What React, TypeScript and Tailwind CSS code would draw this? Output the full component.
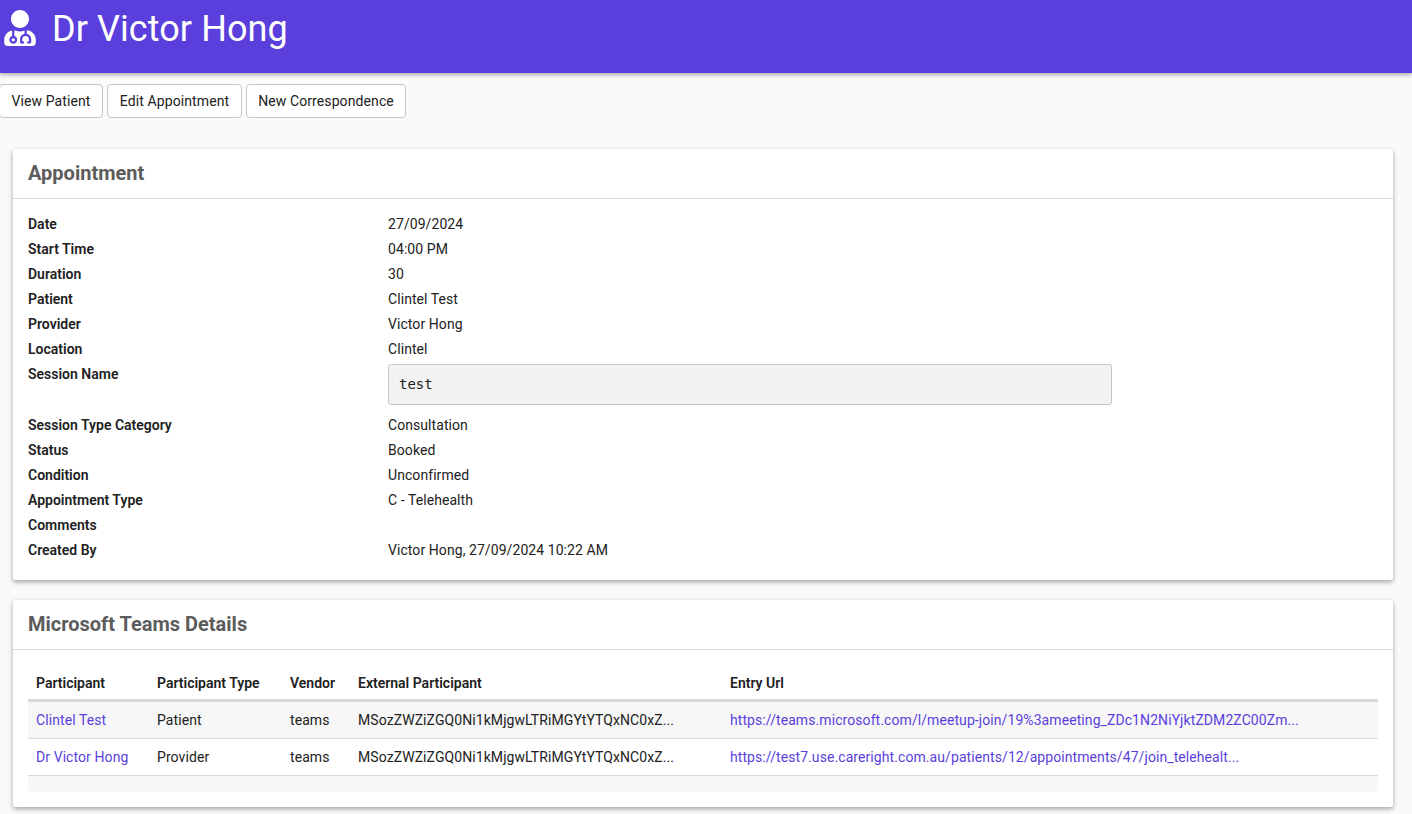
import { FaUserMd } from "react-icons/fa"

const details = [
    { label: "Date", value: "27/09/2024" },
    { label: "Start Time", value: "04:00 PM" },
    { label: "Duration", value: "30" },
    { label: "Patient", value: "Clintel Test" },
    { label: "Provider", value: "Victor Hong" },
    { label: "Location", value: "Clintel" },
]

const moreDetails = [
    { label: "Session Type Category", value: "Consultation" },
    { label: "Status", value: "Booked" },
    { label: "Condition", value: "Unconfirmed" },
    { label: "Appointment Type", value: "C - Telehealth" },
    { label: "Comments", value: "" },
    { label: "Created By", value: "Victor Hong, 27/09/2024 10:22 AM" },
]

const participants = [
    {
        name: "Clintel Test",
        type: "Patient",
        external: "MSozZWZiZGQ0Ni1kMjgwLTRiMGYtYTQxNC0xZ...",
        url: "https://teams.microsoft.com/l/meetup-join/19%3ameeting_ZDc1N2NiYjktZDM2ZC00Zm...",
        rowClass: "bg-[#f7f7f7]",
    },
    {
        name: "Dr Victor Hong",
        type: "Provider",
        external: "MSozZWZiZGQ0Ni1kMjgwLTRiMGYtYTQxNC0xZ...",
        url: "https://test7.use.careright.com.au/patients/12/appointments/47/join_telehealt...",
        rowClass: "bg-white",
    },
]

const headers = ["Participant", "Participant Type", "Vendor", "External Participant", "Entry Url"]

const DetailRow = ({ label, value }: { label: string; value: string }) => {
    return (
        <div className="flex h-[25px] items-center">
            <div className="w-[360px] font-semibold">{label}</div>
            <div className="tracking-[0.07px]">{value}</div>
        </div>
    )
}

const Card = ({ title, children }: { title: string; children: React.ReactNode }) => {
    return (
        <section className="rounded-[2px] bg-white shadow-[0_2px_5px_rgba(0,0,0,0.35)]">
            <h2 className="flex h-[50px] items-center border-b border-[#d9d9d9] px-[15px] pb-[2px] text-[20px] font-bold text-[#5c5c5c]">{title}</h2>
            {children}
        </section>
    )
}

export default function App() {
    return (
        <div className="h-[814px] overflow-hidden bg-[#fafafa] font-['Roboto',sans-serif] text-[14px] text-[#212121]">
            <header className="flex h-[73px] items-start gap-[16px] bg-[#5a3fdd] pl-[4px] pt-[10px] text-white shadow-[0_2px_4px_rgba(0,0,0,0.3)]">
                <FaUserMd className="h-[36px] w-[32px]" />
                <h1 className="text-[36px] leading-[38px] tracking-[0.08px]">Dr Victor Hong</h1>
            </header>

            <div className="mt-[11px] flex gap-[4px] -ml-[1px]">
                <button className="h-[34px] w-[104px] rounded-[4px] border border-[#c7c7c7] bg-white tracking-[0.1px]">View Patient</button>
                <button className="h-[34px] w-[135px] rounded-[4px] border border-[#c7c7c7] bg-white tracking-[0.1px]">Edit Appointment</button>
                <button className="h-[34px] w-[160px] rounded-[4px] border border-[#c7c7c7] bg-white tracking-[0.1px]">New Correspondence</button>
            </div>

            <main className="mt-[31px] ml-[13px] mr-[19px] flex flex-col gap-[20px]">
                <Card title="Appointment">
                    <div className="px-[15px] pt-[13px] pb-[17px]">
                        {details.map((d) => (
                            <DetailRow key={d.label} label={d.label} value={d.value} />
                        ))}
                        <div className="flex h-[51px] items-start">
                            <div className="flex h-[25px] w-[360px] items-center font-semibold">Session Name</div>
                            <div className="mt-[2px] flex h-[41px] w-[724px] items-center rounded-[3px] border border-[#c7c7c7] bg-[#f2f2f2] px-[10px] font-['DejaVu_Sans_Mono',monospace] text-[14px]">test</div>
                        </div>
                        {moreDetails.map((d) => (
                            <DetailRow key={d.label} label={d.label} value={d.value} />
                        ))}
                    </div>
                </Card>

                <Card title="Microsoft Teams Details">
                    <div className="px-[15px] pt-[16px] pb-[15px]">
                        <table className="w-full table-fixed border-separate border-spacing-0">
                            <colgroup>
                                <col className="w-[121px]" />
                                <col className="w-[133px]" />
                                <col className="w-[68px]" />
                                <col className="w-[372px]" />
                                <col />
                            </colgroup>
                            <thead>
                                <tr className="text-left">
                                    {headers.map((h) => (
                                        <th key={h} className="h-[36px] border-b-[3px] border-[#d9d9d9] px-[8px] pt-[1px] font-semibold">{h}</th>
                                    ))}
                                </tr>
                            </thead>
                            <tbody className="tracking-[0.08px]">
                                {participants.map((p) => (
                                    <tr key={p.name} className={p.rowClass}>
                                        <td className="h-[37px] border-b border-[#d9d9d9] px-[8px] text-[#5a3fdd]">{p.name}</td>
                                        <td className="border-b border-[#d9d9d9] px-[8px]">{p.type}</td>
                                        <td className="border-b border-[#d9d9d9] px-[8px]">teams</td>
                                        <td className="border-b border-[#d9d9d9] px-[8px] whitespace-nowrap">{p.external}</td>
                                        <td className="border-b border-[#d9d9d9] px-[8px] whitespace-nowrap text-[#5a3fdd]">{p.url}</td>
                                    </tr>
                                ))}
                            </tbody>
                        </table>
                        <div className="h-[16px] rounded-b-[3px] bg-[#f7f7f7]" />
                    </div>
                </Card>
            </main>
        </div>
    )
}
